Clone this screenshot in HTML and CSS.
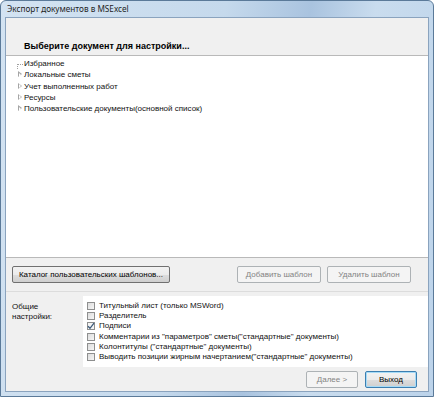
FILE: index.html
```html
<!DOCTYPE html>
<html>
<head>
<meta charset="utf-8">
<link rel="stylesheet" href="styles.css">
</head>
<body>
<div class="window">
  <div class="titlebar">Экспорт документов в MSExcel</div>
  <div class="client">
    <div class="header">Выберите документ для настройки...</div>
    <div class="tree">
      <div class="node"><span class="line"></span>Избранное</div>
      <div class="node"><span class="arrow"></span>Локальные сметы</div>
      <div class="node"><span class="arrow"></span>Учет выполненных работ</div>
      <div class="node"><span class="arrow"></span>Ресурсы</div>
      <div class="node"><span class="arrow"></span>Пользовательские документы(основной список)</div>
    </div>
    <div class="buttons">
      <button class="btn catalog">Каталог пользовательских шаблонов...</button>
      <div class="spacer"></div>
      <button class="btn small" disabled>Добавить шаблон</button>
      <button class="btn small" disabled>Удалить шаблон</button>
    </div>
    <div class="settings">
      <div class="label">Общие<br>настройки:</div>
      <div class="options">
        <label class="opt"><span class="cb"></span>Титульный лист (только MSWord)</label>
        <label class="opt"><span class="cb"></span>Разделитель</label>
        <label class="opt"><span class="cb checked"><svg viewBox="0 0 8 8" width="8" height="8"><path d="M1 4.2 L3 6.3 L7 1.2" fill="none" stroke="#3c5a7a" stroke-width="1.3"/></svg></span>Подписи</label>
        <label class="opt"><span class="cb"></span>Комментарии из "параметров" сметы("стандартные" документы)</label>
        <label class="opt"><span class="cb"></span>Колонтитулы ("стандартные" документы)</label>
        <label class="opt"><span class="cb"></span>Выводить позиции жирным начертанием("стандартные" документы)</label>
      </div>
    </div>
    <div class="footer">
      <button class="btn nav" disabled>Далее &gt;</button>
      <button class="btn nav exit">Выход</button>
    </div>
  </div>
</div>
</body>
</html>
```
FILE: styles.css
```css
html, body {
  margin: 0;
  padding: 0;
  width: 434px;
  height: 397px;
  overflow: hidden;
  background: #ffffff;
}
body {
  font-family: "Liberation Sans", Arial, sans-serif;
  font-size: 8px;
  color: #000;
}
.window {
  width: 434px;
  height: 397px;
  box-sizing: border-box;
  display: flex;
  flex-direction: column;
  background: linear-gradient(100deg, #d3e3f2 0%, #c5d9ec 45%, #a9c3df 62%, #c9dcee 75%, #bcd3ea 100%);
  border: 1px solid #5b7a99;
  border-radius: 6px 6px 0 0;
  padding: 0 4px 4px 4px;
}
.titlebar {
  height: 16px;
  line-height: 16px;
  padding-left: 2px;
  font-family: "Noto Sans", "DejaVu Sans", sans-serif;
  font-size: 8.2px;
  color: #1e1e1e;
  flex: none;
}
.client {
  flex: 1;
  background: #f0f0f0;
  border: 1px solid #8aa3be;
  display: flex;
  flex-direction: column;
  min-height: 0;
}
.header {
  height: 37px;
  box-sizing: border-box;
  padding: 23px 0 0 18px;
  font-weight: bold;
  font-size: 9px;
  flex: none;
}
.tree {
  height: 203px;
  flex: none;
  background: #fff;
  border-top: 1px solid #b9b9b9;
  border-bottom: 1px solid #b9b9b9;
  box-sizing: border-box;
  padding: 2px 0 0 11px;
}
.node {
  height: 11.25px;
  line-height: 11px;
  display: flex;
  align-items: center;
  color: #111;
  white-space: nowrap;
}
.arrow {
  width: 6px;
  height: 7px;
  margin-right: 1px;
  display: inline-block;
  position: relative;
  flex: none;
}
.arrow::before {
  content: "";
  position: absolute;
  left: 1px;
  top: 0;
  border-left: 4px solid #a5a5a5;
  border-top: 3.5px solid transparent;
  border-bottom: 3.5px solid transparent;
}
.arrow::after {
  content: "";
  position: absolute;
  left: 2px;
  top: 1.5px;
  border-left: 2px solid #fff;
  border-top: 2px solid transparent;
  border-bottom: 2px solid transparent;
}
.line {
  width: 6px;
  height: 5px;
  margin-right: 1px;
  margin-top: 5px;
  border-left: 1px dotted #a0a0a0;
  border-top: 1px dotted #a0a0a0;
  box-sizing: border-box;
  flex: none;
}
.buttons {
  height: 34px;
  flex: none;
  display: flex;
  align-items: center;
  padding: 0 17px 0 6px;
  gap: 6px;
  border-bottom: 1px solid #dcdcdc;
  box-sizing: border-box;
}
.spacer { flex: 1; }
.btn {
  font-family: "Liberation Sans", Arial, sans-serif;
  font-size: 8px;
  height: 17px;
  padding: 0;
  border: 1px solid #707070;
  border-radius: 2px;
  background: linear-gradient(#f2f2f2 0%, #ebebeb 50%, #dddddd 51%, #cfcfcf 100%);
  color: #000;
  white-space: nowrap;
}
.btn:disabled {
  border-color: #adb2b5;
  background: #f4f4f4;
  color: #838383;
}
.catalog { width: 158px; }
.small { width: 84px; }
.settings {
  flex: none;
  height: 75px;
  display: flex;
  padding-top: 4px;
  box-sizing: border-box;
}
.label {
  width: 71px;
  padding: 6px 0 0 6px;
  line-height: 10px;
  color: #111;
  flex: none;
}
.options {
  flex: 1;
  background: #fff;
  padding: 5px 0 0 4px;
}
.opt {
  display: flex;
  align-items: center;
  height: 10.2px;
  line-height: 10px;
  color: #111;
  white-space: nowrap;
}
.cb {
  width: 8px;
  height: 8px;
  box-sizing: border-box;
  border: 1px solid #8e8f8f;
  background: linear-gradient(135deg, #dcdcdc, #f6f6f6);
  margin-right: 4px;
  flex: none;
  display: inline-flex;
  align-items: center;
  justify-content: center;
}
.cb.checked { background: #f4f4f4; }
.cb svg { width: 8px; height: 8px; flex: none; }
.footer {
  flex: 1;
  display: flex;
  justify-content: flex-end;
  align-items: center;
  gap: 7px;
  padding-right: 11px;
}
.nav { width: 52px; height: 17px; }
.exit {
  border-color: #3c7fb1;
  box-shadow: inset 0 0 0 1px #a6dbf7;
}
```
